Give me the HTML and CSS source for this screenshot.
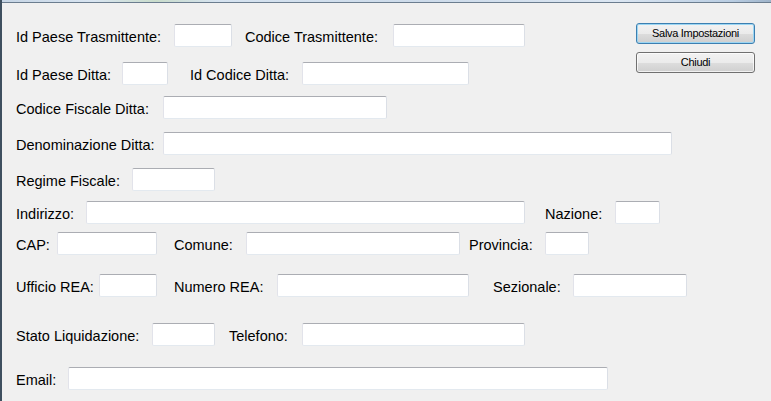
FILE: index.html
```html
<!DOCTYPE html>
<html lang="it">
<head>
<meta charset="utf-8">
<title>Impostazioni</title>
<link rel="stylesheet" href="styles.css">
</head>
<body>
<div class="window">
  <div class="edge"></div>
  <div class="content">
    <div class="top">
      <div class="top-fields">
        <div class="row">
          <label class="lbl w158">Id Paese Trasmittente:</label>
          <input class="fld w58" type="text">
          <label class="lbl w148 ml13">Codice Trasmittente:</label>
          <input class="fld w132" type="text">
        </div>
        <div class="row mt15">
          <label class="lbl w106">Id Paese Ditta:</label>
          <input class="fld w46" type="text">
          <label class="lbl w112 ml22">Id Codice Ditta:</label>
          <input class="fld w167" type="text">
        </div>
      </div>
      <div class="actions">
        <button class="btn btn-default" type="button">Salva Impostazioni</button>
        <button class="btn" type="button">Chiudi</button>
      </div>
    </div>
    <div class="row mt11">
      <label class="lbl w147">Codice Fiscale Ditta:</label>
      <input class="fld w224" type="text">
    </div>
    <div class="row mt13">
      <label class="lbl w147">Denominazione Ditta:</label>
      <input class="fld w509" type="text">
    </div>
    <div class="row mt13">
      <label class="lbl w116">Regime Fiscale:</label>
      <input class="fld w83" type="text">
    </div>
    <div class="row mt10">
      <label class="lbl w70">Indirizzo:</label>
      <input class="fld w439" type="text">
      <label class="lbl w70 ml20">Nazione:</label>
      <input class="fld w45" type="text">
    </div>
    <div class="row mt8">
      <label class="lbl w41">CAP:</label>
      <input class="fld w100" type="text">
      <label class="lbl w72 ml17">Comune:</label>
      <input class="fld w214" type="text">
      <label class="lbl w76 ml9">Provincia:</label>
      <input class="fld w44" type="text">
    </div>
    <div class="row mt19">
      <label class="lbl w83">Ufficio REA:</label>
      <input class="fld w58" type="text">
      <label class="lbl w103 ml17">Numero REA:</label>
      <input class="fld w192" type="text">
      <label class="lbl w80 ml24">Sezionale:</label>
      <input class="fld w114" type="text">
    </div>
    <div class="row mt26">
      <label class="lbl w136">Stato Liquidazione:</label>
      <input class="fld w63" type="text">
      <label class="lbl w73 ml14">Telefono:</label>
      <input class="fld w223" type="text">
    </div>
    <div class="row mt21">
      <label class="lbl w52">Email:</label>
      <input class="fld w540" type="text">
    </div>
  </div>
</div>
</body>
</html>
```

FILE: styles.css
```css
html, body {
  margin: 0;
  padding: 0;
  background: #f0f0f0;
}

.window {
  width: 771px;
  height: 401px;
  box-sizing: border-box;
  border-left: 2px solid #3e4f5f;
  background: #f0f0f0;
  overflow: hidden;
  font-family: "Liberation Sans", Arial, sans-serif;
  color: #000;
}

.edge {
  height: 2px;
  border-bottom: 1px solid #6b7d8f;
  background: linear-gradient(to right, #c6d5e5 0%, #d9e5f1 12%, #c9dccb 20%, #d6e3f0 28%, #cddbea 55%, #dbe6f2 80%, #b9cde2 95%, #9fb4ca 100%);
}

.content {
  padding: 20px 16px 0 14px;
}

.top {
  display: flex;
  justify-content: space-between;
  align-items: flex-start;
}

.top-fields {
  margin-top: 1px;
}

.actions {
  display: flex;
  flex-direction: column;
  gap: 8px;
}

.btn {
  width: 119px;
  height: 21px;
  box-sizing: border-box;
  margin: 0;
  padding: 0;
  border: 1px solid #707070;
  border-radius: 3px;
  background: linear-gradient(to bottom, #f2f2f2 0%, #ebebeb 50%, #dddddd 51%, #cfcfcf 100%);
  box-shadow: inset 0 0 0 1px rgba(255, 255, 255, 0.7);
  font-family: "Liberation Sans", Arial, sans-serif;
  font-size: 11px;
  letter-spacing: -0.3px;
  line-height: 19px;
  color: #000;
  text-align: center;
}

.btn-default {
  border-color: #3c7fb1;
  box-shadow: inset 0 0 0 1px #9cd6f3;
}

.row {
  display: flex;
  align-items: flex-start;
  height: 23px;
}

.lbl {
  flex: none;
  box-sizing: border-box;
  font-size: 14.5px;
  line-height: 16px;
  padding-top: 5px;
  white-space: nowrap;
}

.fld {
  flex: none;
  box-sizing: border-box;
  height: 23px;
  margin: 0;
  padding: 0 3px;
  background: #fff;
  border-style: solid;
  border-width: 1px;
  border-color: #abadb3 #dbdfe6 #e3e9ef #e2e3ea;
  border-radius: 2px;
  font-family: "Liberation Sans", Arial, sans-serif;
  font-size: 13px;
  outline: none;
}

/* row spacing */
.mt8 { margin-top: 8px; }
.mt10 { margin-top: 10px; }
.mt11 { margin-top: 11px; }
.mt13 { margin-top: 13px; }
.mt15 { margin-top: 15px; }
.mt19 { margin-top: 19px; }
.mt21 { margin-top: 21px; }
.mt26 { margin-top: 26px; }

/* horizontal spacing */
.ml9 { margin-left: 9px; }
.ml13 { margin-left: 13px; }
.ml14 { margin-left: 14px; }
.ml17 { margin-left: 17px; }
.ml20 { margin-left: 20px; }
.ml22 { margin-left: 22px; }
.ml24 { margin-left: 24px; }

/* widths */
.w41 { width: 41px; }
.w44 { width: 44px; }
.w45 { width: 45px; }
.w46 { width: 46px; }
.w52 { width: 52px; }
.w58 { width: 58px; }
.w63 { width: 63px; }
.w70 { width: 70px; }
.w72 { width: 72px; }
.w73 { width: 73px; }
.w76 { width: 76px; }
.w80 { width: 80px; }
.w83 { width: 83px; }
.w100 { width: 100px; }
.w103 { width: 103px; }
.w106 { width: 106px; }
.w112 { width: 112px; }
.w114 { width: 114px; }
.w116 { width: 116px; }
.w132 { width: 132px; }
.w136 { width: 136px; }
.w147 { width: 147px; }
.w148 { width: 148px; }
.w158 { width: 158px; }
.w167 { width: 167px; }
.w192 { width: 192px; }
.w214 { width: 214px; }
.w223 { width: 223px; }
.w224 { width: 224px; }
.w439 { width: 439px; }
.w509 { width: 509px; }
.w540 { width: 540px; }
```
